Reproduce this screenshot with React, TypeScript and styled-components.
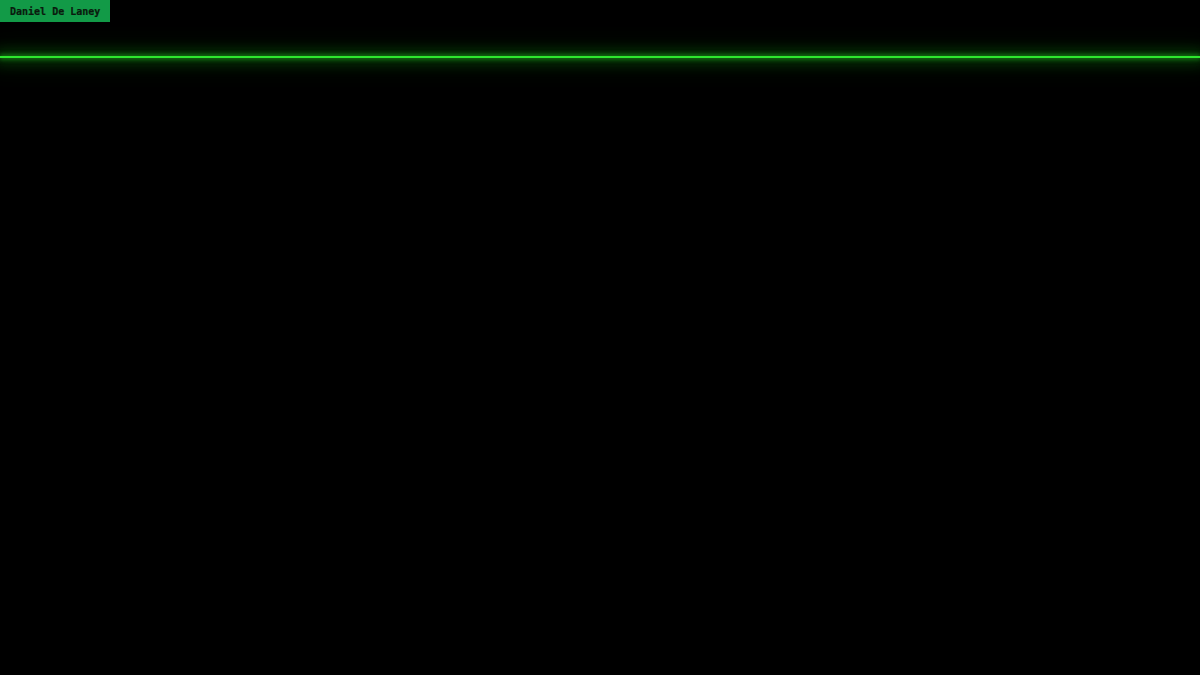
import React from "react";
import styled, { createGlobalStyle } from "styled-components";

const GlobalStyle = createGlobalStyle`
  html, body {
    margin: 0;
    padding: 0;
    background: #000;
  }
  html {
    overflow-y: scroll;
  }
  body {
    font-family: "DejaVu Sans Mono", "Liberation Mono", monospace;
  }
  ::-webkit-scrollbar {
    width: 10px;
    background: #f1f1f1;
  }
  ::-webkit-scrollbar-track {
    background: #f1f1f1;
    border-left: 1px solid #e6e6e6;
  }
  ::-webkit-scrollbar-thumb {
    background: #c1c1c1;
    border: 2px solid #f1f1f1;
    border-top-width: 0;
    border-bottom-width: 0;
  }
  ::-webkit-scrollbar-button:single-button {
    height: 10px;
    background-color: #f1f1f1;
    background-repeat: no-repeat;
    background-position: center;
  }
  ::-webkit-scrollbar-button:single-button:vertical:decrement {
    background-image: linear-gradient(to top, #a3a3a3 0 2px, transparent 2px);
    background-size: 6px 4px;
    background-image: conic-gradient(from 150deg at 50% 0, #505050 0 60deg, transparent 60deg);
  }
  ::-webkit-scrollbar-button:single-button:vertical:increment {
    background-size: 6px 4px;
    background-image: conic-gradient(from -30deg at 50% 100%, #505050 0 60deg, transparent 60deg);
  }
`;

const Page = styled.div`
  min-height: 1850px;
  background: #000;
  display: flex;
  flex-direction: column;
`;

const NameTag = styled.div`
  align-self: flex-start;
  box-sizing: border-box;
  background-color: #129a47;
  color: #0a1a0e;
  font-size: 10px;
  font-weight: bold;
  line-height: 21px;
  height: 22px;
  padding: 1px 10px 0;
  white-space: pre;
  -webkit-text-stroke: 0.2px #0a1a0e;
`;

const Horizon = styled.div`
  margin-top: 34px;
  height: 2px;
  background-color: #2ee62e;
  box-shadow: 0 0 5px 1px rgba(40, 210, 40, 0.6), 0 0 14px 6px rgba(20, 150, 20, 0.3),
    0 0 26px 10px rgba(10, 90, 10, 0.18);
`;

const App = () => {
  return (
    <>
      <GlobalStyle />
      <Page>
        <NameTag>Daniel De Laney</NameTag>
        <Horizon />
      </Page>
    </>
  );
};

export default App;
